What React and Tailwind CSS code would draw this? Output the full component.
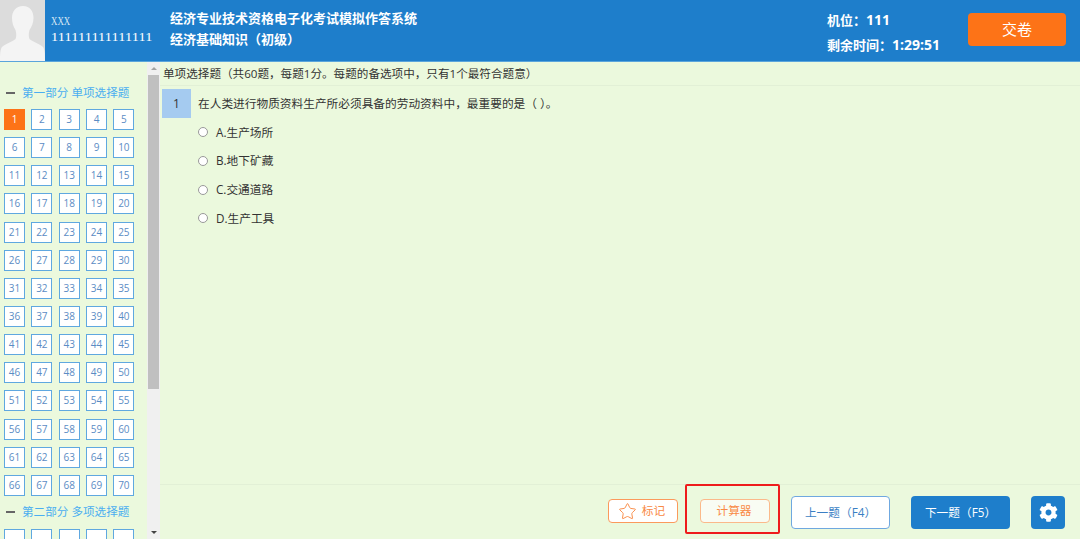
import React from 'react';
import { Star } from 'lucide-react';
import { FaCog } from 'react-icons/fa';

const CJK = 'font-["Open_Sans","Noto_Sans_CJK_SC",sans-serif]';

const options = ['A.生产场所', 'B.地下矿藏', 'C.交通道路', 'D.生产工具'];
const numbers = Array.from({ length: 70 }, (_, i) => i + 1);

const Avatar = () => (
    <svg width="45" height="61" viewBox="0 0 45 61" className="shrink-0 bg-[#dcdcdc]">
        <path d="M23 6c-7 0-11 5-11 12 0 5 1.500 9 3.500 12 1 3 1 7 0 9-3 3-11 5-13.500 8-1.500 2-2 6-2 14h45c0-8-.5-12-2-14-2.500-3-10.500-5-13.500-8-1-2-1-6 0-9 2-3 4-7 4-12 0-7-3.500-12-10.500-12z" fill="#f4f4f4" />
    </svg>
);

const SectionTitle = ({ children, className = '' }) => (
    <div className={`flex items-center h-[16px] pl-[6px] text-[11.6px] text-[#4aaef0] ${className}`}>
        <span className="w-[9px] h-[2px] bg-[#666] mr-[7px]" />
        {children}
    </div>
);

const Cell = ({ n, active }) => (
    <div className={`w-[21px] h-[21px] flex items-center justify-center text-[10px] border ${active ? 'bg-[#fd7317] border-[#fd7317] text-white' : 'bg-white border-[#5fa8e0] text-[#5b8cc4]'}`}>
        {n}
    </div>
);

const Sidebar = () => (
    <aside className="w-[160px] shrink-0 flex overflow-hidden">
        <div className="w-[147px] shrink-0 pt-[23px]">
            <SectionTitle>第一部分 单项选择题</SectionTitle>
            <div className="grid grid-cols-[repeat(5,21px)] gap-x-[6.35px] gap-y-[7.15px] pl-[4px] mt-[8px]">
                {numbers.map((n) => <Cell key={n} n={n} active={n === 1} />)}
            </div>
            <SectionTitle className="mt-[8px]">第二部分 多项选择题</SectionTitle>
            <div className="grid grid-cols-[repeat(5,21px)] gap-x-[6.35px] pl-[4px] mt-[9px]">
                {[1, 2, 3, 4, 5].map((n) => <Cell key={n} n="" />)}
            </div>
        </div>
        <div className="w-[13px] shrink-0 flex flex-col bg-[#f0f0f0]">
            <div className="h-[13px] flex items-center justify-center">
                <span className="w-0 h-0 border-x-[3px] border-x-transparent border-b-[3px] border-b-[#a3a3a3]" />
            </div>
            <div className="h-[314px] bg-[#c0c0c0] mx-px" />
            <div className="flex-1 flex items-end justify-center pb-[5px]">
                <span className="w-0 h-0 border-x-[3px] border-x-transparent border-t-[3px] border-t-[#444]" />
            </div>
        </div>
    </aside>
);

export default function App() {
    return (
        <div className={`w-[1080px] h-[539px] overflow-hidden flex flex-col bg-[#ebf9dd] ${CJK}`}>
            <header className="h-[62px] shrink-0 flex items-start bg-[#1e7ecb] border-b border-[#5aa5db] text-white">
                <Avatar />
                <div className="w-[119px] shrink-0 pl-[6px] pt-[13px] font-['Liberation_Serif',serif]">
                    <div className="text-[13px] leading-[16px] text-[#dbe9f5] w-max scale-x-[0.68] origin-left">XXX</div>
                    <div className="text-[13.5px] leading-[16px] tracking-[0.1px] w-max scale-x-[1.06] origin-left">111111111111111</div>
                </div>
                <div className="flex-1 pl-[6px] pt-[8px] text-[13px] font-bold leading-[20px]">
                    <div>经济专业技术资格电子化考试模拟作答系统</div>
                    <div className="mt-[1px]">经济基础知识（初级）</div>
                </div>
                <div className="w-[141px] shrink-0 pt-[10px] text-[13px] font-bold leading-[20px]">
                    <div>机位：<span className="text-[14px]">111</span></div>
                    <div className="mt-[5px]">剩余时间：<span className="text-[14px]">1:29:51</span></div>
                </div>
                <button className="w-[98px] h-[33px] mt-[13px] mr-[14px] rounded-[4px] bg-[#fd7317] text-[15px] text-white">交卷</button>
            </header>
            <div className="flex-1 flex min-h-0">
                <Sidebar />
                <main className="flex-1 flex flex-col min-w-0 text-[#333]">
                    <div className="h-[24px] shrink-0 flex items-center pl-[3px] text-[11.6px] border-b border-[#e2f0d6]">
                        单项选择题（共60题，每题1分。每题的备选项中，只有1个最符合题意）
                    </div>
                    <div className="flex-1 pt-[3px] pl-[2px]">
                        <div className="flex items-center">
                            <div className="w-[29px] h-[29px] flex items-center justify-center bg-[#a5cbf0] text-[12px]">1</div>
                            <p className="ml-[7px] text-[11.7px]">在人类进行物质资料生产所必须具备的劳动资料中，最重要的是（ ）。</p>
                        </div>
                        <ul className="pl-[36px]">
                            {options.map((o) => (
                                <li key={o} className="h-[28.7px] flex items-center text-[11.7px]">
                                    <span className="w-[10px] h-[10px] rounded-full bg-white border border-[#999]" />
                                    <span className="ml-[8px]">{o}</span>
                                </li>
                            ))}
                        </ul>
                    </div>
                    <footer className="h-[55px] shrink-0 flex items-start border-t border-[#e2f0d6] pl-[448px] text-[11.7px]">
                        <button className="w-[70px] h-[24px] mt-[14px] flex items-center justify-center gap-[5px] pr-[3px] rounded-[4px] bg-white border border-[#fb9a5c] text-[#f98a45]">
                            <Star size={19} strokeWidth={1.2} />
                            标记
                        </button>
                        <div className="w-[95px] h-[50px] ml-[7px] mt-[-1px] flex items-start rounded-[2px] border-2 border-[#ee1c1c]">
                            <button className="w-[70px] h-[24px] mt-[13px] ml-[13px] pr-[2px] rounded-[4px] bg-[#f9fcf3] border border-[#fbb98a] text-[#f98a45]">计算器</button>
                        </div>
                        <button className="w-[99px] h-[33px] ml-[11px] mt-[11px] pt-px rounded-[4px] bg-white border border-[#6fa8e0] text-[#3b7fc4]">上一题（F4）</button>
                        <button className="w-[99px] h-[33px] ml-[21px] mt-[11px] pt-px rounded-[4px] bg-[#1e7ecb] text-white">下一题（F5）</button>
                        <button className="w-[34px] h-[33px] ml-[21px] mt-[11px] flex items-center justify-center rounded-[4px] bg-[#1e7ecb] text-white">
                            <FaCog size={19} />
                        </button>
                    </footer>
                </main>
            </div>
        </div>
    );
}
